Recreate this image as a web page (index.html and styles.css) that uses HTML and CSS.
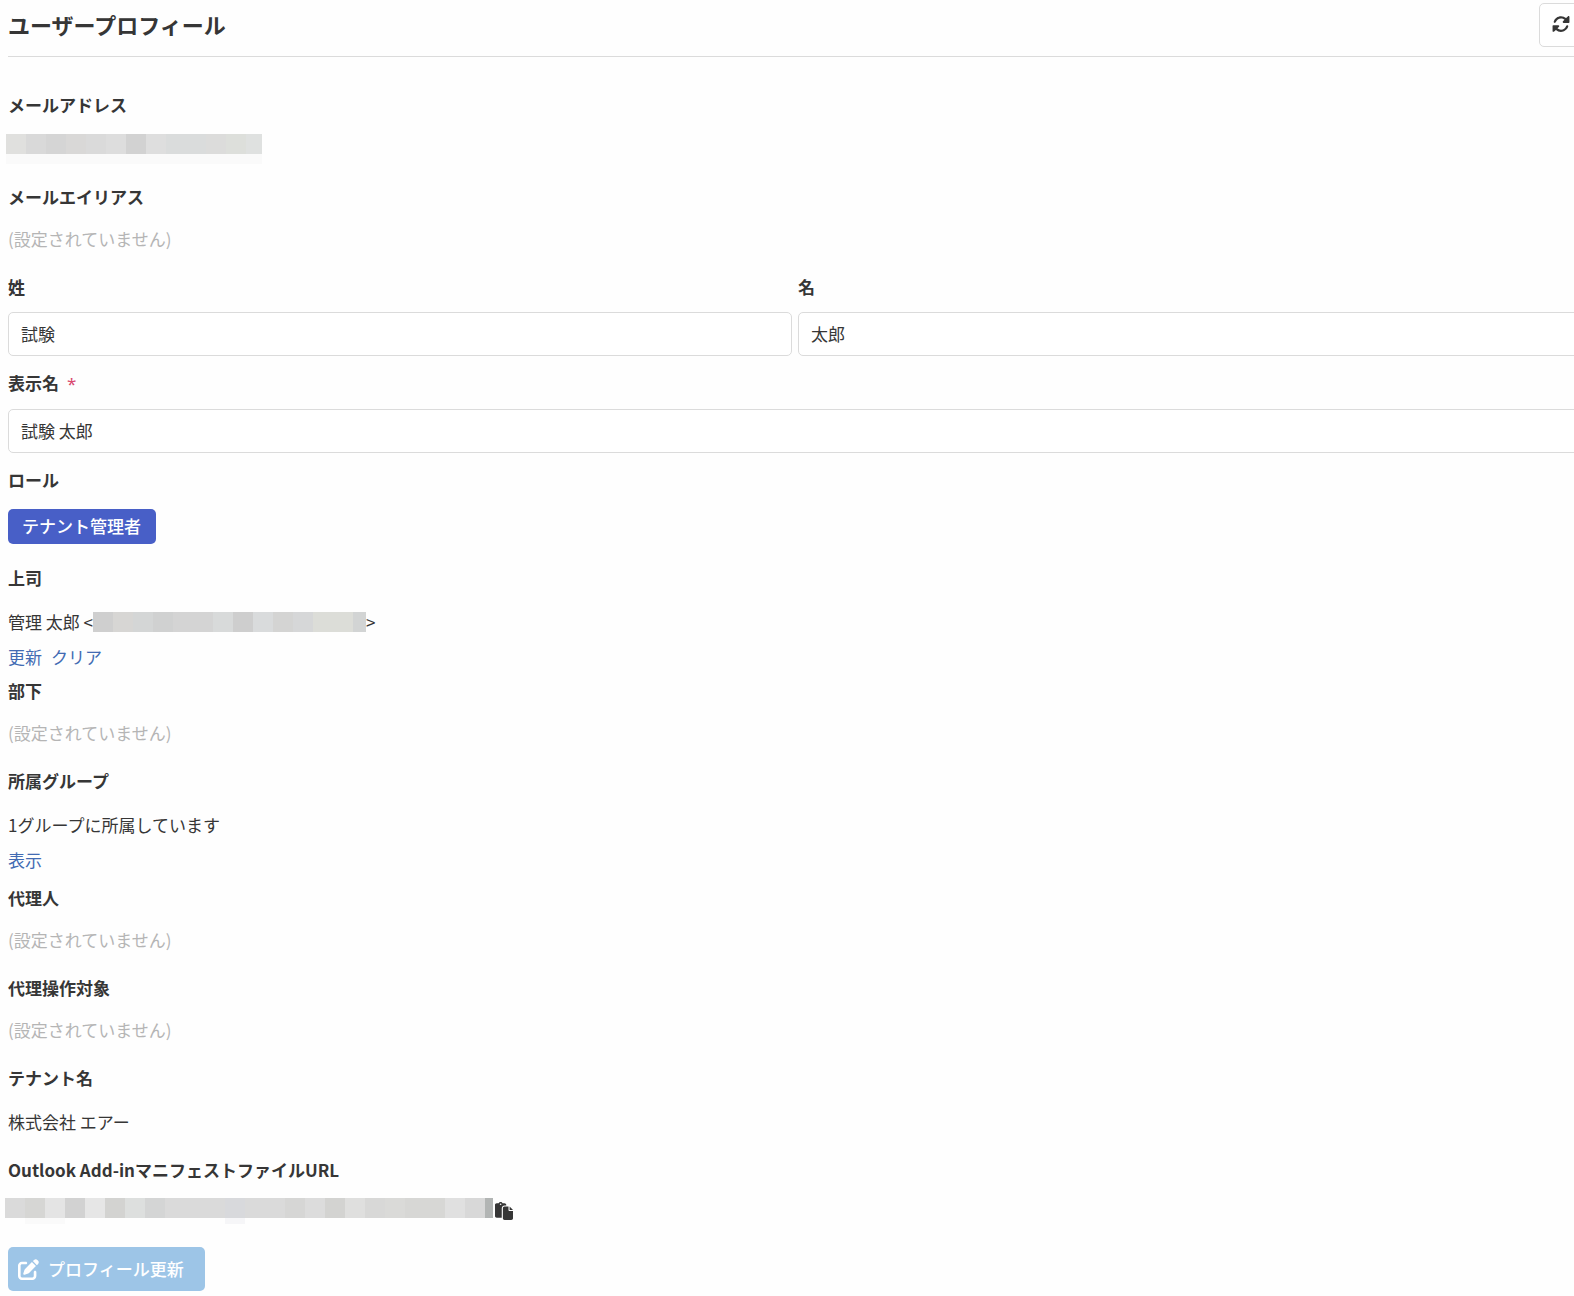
FILE: index.html
```html
<!DOCTYPE html>
<html lang="ja">
<head>
    <meta charset="UTF-8">
    <meta name="viewport" content="width=device-width, initial-scale=1.0">
    <title>ユーザープロフィール</title>
    <link rel="stylesheet" href="styles.css">
</head>
<body>

<main class="profile">
    <header class="page-header">
        <h1>ユーザープロフィール</h1>
        <button type="button" class="refresh-button" aria-label="再読み込み">
            <svg class="icon" viewBox="0 0 512 512" aria-hidden="true"><path d="M449.9 39.96l-48.5 48.53C362.5 53.19 311.4 32 256 32C161.5 32 78.59 92.34 49.58 182.2c-5.438 16.81 3.797 34.88 20.61 40.28c16.97 5.5 34.86-3.812 40.3-20.59C130.9 138.5 189.4 96 256 96c37.96 0 73 14.18 100.2 37.8L311.1 178C295.1 194.8 306.8 223.4 330.4 224h146.3C487.7 223.7 496 215.3 496 204.5V59.04C496 34.99 466.9 22.95 449.9 39.96zM441.8 289.6c-16.94-5.438-34.88 3.812-40.3 20.59C381.1 373.5 322.6 416 256 416c-37.96 0-73-14.18-100.2-37.8L200 334C216.9 317.2 205.2 288.6 181.6 288H35.26C24.34 288.3 16 296.7 16 307.5v145.4c0 24.04 29.07 36.08 46.07 19.07l48.5-48.53C149.5 458.8 200.6 480 255.1 480c94.45 0 177.4-60.34 206.4-150.2C467.9 313 458.6 294.1 441.8 289.6z"/></svg>
        </button>
    </header>

    <form>
        <div class="field">
            <h2 class="label">メールアドレス</h2>
            <div class="value"><span class="mask mask-email"></span></div>
        </div>

        <div class="field">
            <h2 class="label">メールエイリアス</h2>
            <p class="value empty">(設定されていません)</p>
        </div>

        <div class="name-row">
            <div class="field">
                <label class="label" for="lastName">姓</label>
                <input type="text" id="lastName" value="試験">
            </div>
            <div class="field">
                <label class="label" for="firstName">名</label>
                <input type="text" id="firstName" value="太郎">
            </div>
        </div>

        <div class="field field-input">
            <label class="label" for="displayName">表示名<span class="required">*</span></label>
            <input type="text" id="displayName" value="試験 太郎" required>
        </div>

        <div class="field">
            <h2 class="label">ロール</h2>
            <div class="tags"><span class="tag">テナント管理者</span></div>
        </div>

        <div class="field field-manager">
            <h2 class="label">上司</h2>
            <p class="value">管理 太郎 &lt;<span class="mask mask-manager"></span>&gt;</p>
            <div class="links">
                <a href="#">更新</a>
                <a href="#">クリア</a>
            </div>
        </div>

        <div class="field">
            <h2 class="label">部下</h2>
            <p class="value empty">(設定されていません)</p>
        </div>

        <div class="field field-groups">
            <h2 class="label">所属グループ</h2>
            <p class="value">1グループに所属しています</p>
            <div class="links">
                <a href="#">表示</a>
            </div>
        </div>

        <div class="field">
            <h2 class="label">代理人</h2>
            <p class="value empty">(設定されていません)</p>
        </div>

        <div class="field">
            <h2 class="label">代理操作対象</h2>
            <p class="value empty">(設定されていません)</p>
        </div>

        <div class="field">
            <h2 class="label">テナント名</h2>
            <p class="value">株式会社 エアー</p>
        </div>

        <div class="field">
            <h2 class="label">Outlook Add-inマニフェストファイルURL</h2>
            <div class="value value-url">
                <span class="mask mask-url"></span>
                <button type="button" class="copy-button" aria-label="コピー">
                    <svg class="icon" viewBox="0 0 512 512" aria-hidden="true"><path d="M320 96V80C320 53.49 298.5 32 272 32H215.4C204.3 12.89 183.6 0 160 0S115.7 12.89 104.6 32H48C21.49 32 0 53.49 0 80v320C0 426.5 21.49 448 48 448l144 .0013L192 176C192 131.8 227.8 96 272 96H320zM160 88C146.8 88 136 77.25 136 64S146.8 40 160 40S184 50.75 184 64S173.3 88 160 88zM416 128v96h96L416 128zM384 224L384 128h-112C245.5 128 224 149.5 224 176v288c0 26.51 21.49 48 48 48h192c26.51 0 48-21.49 48-48V256h-96C398.4 256 384 241.6 384 224z"/></svg>
                </button>
            </div>
        </div>

        <button type="submit" class="submit-button" disabled>
            <svg class="icon" viewBox="0 0 512 512" aria-hidden="true"><path d="M471.6 21.7c-21.9-21.9-57.3-21.9-79.2 0L362.3 51.7l97.9 97.9 30.1-30.1c21.9-21.9 21.9-57.3 0-79.2L471.6 21.7zm-299.2 220c-6.1 6.1-10.8 13.6-13.5 21.9l-29.6 88.8c-2.9 8.6-.6 18.1 5.8 24.6s15.9 8.7 24.6 5.8l88.8-29.6c8.2-2.7 15.7-7.4 21.9-13.5L437.7 172.3 339.7 74.3 172.4 241.7zM96 64C43 64 0 107 0 160V416c0 53 43 96 96 96H352c53 0 96-43 96-96V320c0-17.7-14.3-32-32-32s-32 14.3-32 32v96c0 17.7-14.3 32-32 32H96c-17.7 0-32-14.3-32-32V160c0-17.7 14.3-32 32-32h96c17.7 0 32-14.3 32-32s-14.3-32-32-32H96z"/></svg>
            プロフィール更新
        </button>
    </form>
</main>

</body>
</html>
```
FILE: styles.css
```css
* {
    box-sizing: border-box;
}
body {
    margin: 0;
    background: #fefefe;
    color: #363636;
    font-family: "Noto Sans CJK JP", sans-serif;
    font-size: 17px;
    line-height: 26px;
    overflow-x: hidden;
}
h1, h2, p {
    margin: 0;
}
input, button {
    font: inherit;
    color: inherit;
}
.icon {
    display: block;
    fill: currentColor;
}
/* full width plus the left gutter, so the right edge runs off the window */
.profile {
    width: 100%;
    margin-left: 8px;
    padding: 3px 0 5px;
}
.page-header {
    display: flex;
    justify-content: space-between;
    align-items: center;
    padding-bottom: 9px;
    border-bottom: 1px solid #dbdbdb;
    margin-bottom: 35px;
}
h1 {
    padding-bottom: 2px;
    font-size: 22px;
    line-height: 32px;
    font-weight: 700;
}
.refresh-button {
    display: flex;
    justify-content: center;
    align-items: center;
    width: 43px;
    height: 44px;
    padding: 0 0 2px;
    background: #fff;
    border: 1px solid #dbdbdb;
    border-radius: 5px;
    cursor: pointer;
}
.refresh-button .icon {
    width: 18px;
}
.field {
    margin-bottom: 16px;
}
.label {
    display: block;
    margin-bottom: 12px;
    font-size: 17px;
    font-weight: 700;
    line-height: 26px;
}
.value {
    display: flex;
    align-items: center;
    height: 38px;
}
.empty {
    height: 36px;
    padding-bottom: 2px;
    color: #b5b5b5;
}
.required {
    margin-left: 8px;
    color: #d9486e;
    font-family: "Noto Sans", sans-serif;
    font-weight: 400;
}
input {
    display: block;
    width: 100%;
    height: 44px;
    padding: 0 12px 2px;
    background: #fff;
    border: 1px solid #dbdbdb;
    border-radius: 5px;
}
.name-row {
    display: grid;
    grid-template-columns: 1fr 1fr;
    gap: 6px;
}
.name-row .field, .field-input {
    margin-bottom: 14px;
}
.tags {
    padding: 4px 0 5px;
}
.tag {
    display: inline-flex;
    align-items: center;
    height: 35px;
    padding: 0 15px 2px 14px;
    background: #485fc7;
    color: #fff;
    border-radius: 5px;
    font-weight: 500;
    vertical-align: top;
}
.links {
    display: flex;
    gap: 9px;
    margin-top: 3px;
}
.links a {
    color: #426bb3;
    text-decoration: none;
}
.field-manager {
    margin-bottom: 8px;
}
.field-groups {
    margin-bottom: 12px;
}
.value-url {
    height: 36px;
    padding-bottom: 4px;
}
/* hidden values */
.mask {
    height: 20px;
}
.mask-email {
    width: 256px;
    height: 30px;
    margin-left: -2px;
    background:
        linear-gradient(#fafafa, #fafafa) 0 20px / 100% 10px no-repeat,
        linear-gradient(to right, #e0e0de 20px, #d9d9d9 20px 40px, #d5d5d5 40px 60px, #d9d8d7 60px 80px, #dadada 80px 100px, #dddddd 100px 120px, #d2d2d2 120px 140px, #dedede 140px 160px, #dadcdc 160px 200px, #dcdcdb 200px 220px, #dddfdb 220px 240px, #dfe1e0 240px);
}
.mask-manager {
    width: 273px;
    background: linear-gradient(to right, #cfcfcf 20px, #d7d6d4 20px 40px, #d4d6d6 40px 60px, #d0d1d1 60px 80px, #d4d4d4 80px 120px, #d8dada 120px 140px, #cecece 140px 160px, #d9dbdc 160px 180px, #d4d4d3 180px 200px, #d6d7d8 200px 220px, #dcddd8 220px 260px, #d2d4d4 260px);
}
.mask-url {
    width: 488px;
    height: 26px;
    margin-left: -3px;
    background:
        linear-gradient(#fafafa, #fafafa) 20px 20px / 40px 6px no-repeat,
        linear-gradient(#f6f6f8, #f6f6f8) 220px 20px / 20px 6px no-repeat,
        linear-gradient(to right, #dadada 20px, #d6d6d4 20px 40px, #e4e4e4 40px 60px, #d2d2d2 60px 80px, #e6e6e6 80px 100px, #d3d3d1 100px 120px, #dddfde 120px 140px, #d4d5d5 140px 160px, #dadada 160px 220px, #d8d9dc 220px 240px, #dadada 240px 280px, #d6d6d5 280px 300px, #dcdcdc 300px 320px, #d3d3d1 320px 340px, #dfdfde 340px 360px, #d8d8d7 360px 380px, #dadad8 380px 400px, #d7d7d5 400px 440px, #e0e0e0 440px 460px, #d8d8d8 460px 480px, #b2b5b4 480px) 0 0 / 100% 20px no-repeat;
}
.copy-button {
    margin-left: 2px;
    padding: 0;
    background: none;
    border: none;
    cursor: pointer;
}
.copy-button .icon {
    width: 18px;
    height: 18px;
}
.submit-button {
    display: flex;
    align-items: center;
    gap: 9px;
    height: 44px;
    padding: 0 21px 0 10px;
    background: #9dc5e7;
    color: #fff;
    border: none;
    border-radius: 5px;
    font-weight: 500;
}
.submit-button .icon {
    width: 21px;
}
```
